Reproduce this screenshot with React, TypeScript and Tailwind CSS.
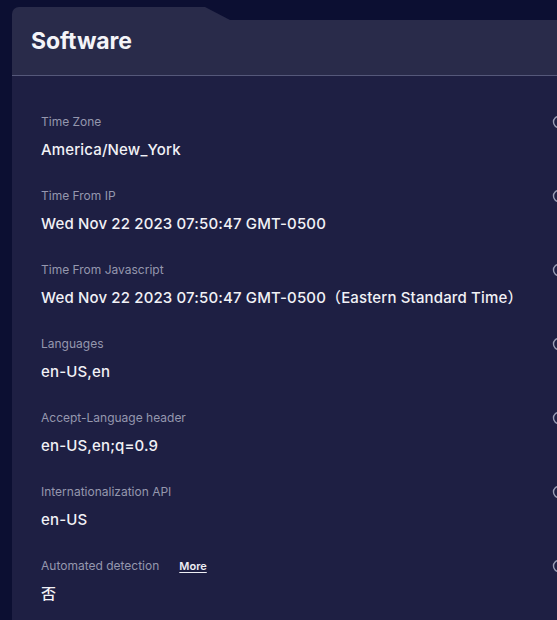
import React from 'react';

const rows: { label: string; value: string; more?: boolean }[] = [
  { label: 'Time Zone', value: 'America/New_York' },
  { label: 'Time From IP', value: 'Wed Nov 22 2023 07:50:47 GMT-0500' },
  { label: 'Time From Javascript', value: 'Wed Nov 22 2023 07:50:47 GMT-0500（Eastern Standard Time）' },
  { label: 'Languages', value: 'en-US,en' },
  { label: 'Accept-Language header', value: 'en-US,en;q=0.9' },
  { label: 'Internationalization API', value: 'en-US' },
  { label: 'Automated detection', value: '否', more: true },
];

function InfoIcon() {
  return (
    <svg width="14" height="14" viewBox="0 0 14 14" className="shrink-0">
      <circle cx="7" cy="7" r="5.5" fill="none" stroke="#9a9cb4" strokeWidth="1.4" />
    </svg>
  );
}

export default function App() {
  return (
    <div
      className="w-[557px] h-[620px] overflow-hidden bg-[#0c0f32] pt-[7px] pl-[12px]"
      style={{ fontFamily: 'Inter, "Noto Sans CJK SC", sans-serif' }}
    >
      <div className="w-[600px]">
        {/* tab */}
        <div className="h-[13px] w-[218px] rounded-tl-[7px] bg-[#292b4a] [clip-path:polygon(0_0,193px_0,218px_100%,0_100%)]" />
        {/* header */}
        <div className="h-[56px] bg-[#292b4a] flex items-center pl-[19px] pb-[12px] border-b border-[#55587a]">
          <h2 className="text-[23px] font-bold text-[#f4f4f8] tracking-[-0.1px]">Software</h2>
        </div>
        {/* body */}
        <div className="bg-[#1e1f43] pt-[39px] pl-[29px] pr-[5px] min-h-[560px]">
          {rows.map((row) => (
            <div key={row.label} className="h-[74px]">
              <div className="flex items-center h-[14px]">
                <div className="w-[511px] flex items-center">
                  <span className="text-[12px] leading-[14px] text-[#9597ae]">{row.label}</span>
                  {row.more && (
                    <span className="ml-[20px] text-[11px] leading-[14px] font-semibold text-[#eeeef4] underline underline-offset-2">
                      More
                    </span>
                  )}
                </div>
                <InfoIcon />
              </div>
              <div className="mt-[11px] text-[15px] leading-[20px] font-medium tracking-[0.15px] text-[#f1f1f6] whitespace-nowrap">
                {row.value}
              </div>
            </div>
          ))}
        </div>
      </div>
    </div>
  );
}
